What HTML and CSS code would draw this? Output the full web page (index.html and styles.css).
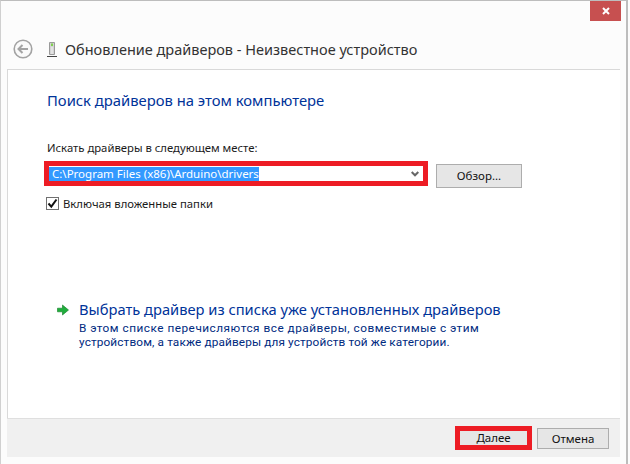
FILE: index.html
```html
<!DOCTYPE html>
<html lang="ru">
<head>
<meta charset="utf-8">
<title>Обновление драйверов</title>
<link rel="stylesheet" href="styles.css">
</head>
<body>
<div class="window">
  <div class="caption">
    <div class="close"><svg width="8" height="8" viewBox="0 0 8 8"><path d="M1 1 7 7M7 1 1 7" stroke="#fff" stroke-width="2" fill="none"/></svg></div>
  </div>
  <div class="header">
    <svg class="back" width="20" height="20" viewBox="0 0 20 20"><circle cx="10" cy="10" r="8.800" fill="#fafafa" stroke="#a3a3a3" stroke-width="1.600"/><path d="M5.500 10H15M9.500 6 5.500 10l4 4" fill="none" stroke="#a3a3a3" stroke-width="2"/></svg>
    <svg class="device" width="10" height="15" viewBox="0 0 10 15"><path d="M2.500.5h5v12h-5z" fill="#d4d4d4" stroke="#9a9a9a"/><path d="M4 1.500h2v2.500H4z" fill="#7fd04f"/><path d="M4.500 5h1v7h-1z" fill="#f2f2f2"/><path d="M0 14.500h10" stroke="#444"/></svg>
    <span class="title">Обновление драйверов - Неизвестное устройство</span>
  </div>
  <div class="panel">
    <h1 class="heading">Поиск драйверов на этом компьютере</h1>
    <div class="label">Искать драйверы в следующем месте:</div>
    <div class="path-row">
      <div class="combo">
        <span class="selected">C:\Program Files (x86)\Arduino\drivers</span>
        <svg class="chevron" width="8" height="6" viewBox="0 0 8 6"><path d="M.7 1 4 4.300 7.300 1" fill="none" stroke="#666" stroke-width="2"/></svg>
      </div>
      <div class="btn browse">Обзор...</div>
    </div>
    <div class="check-row">
      <span class="checkbox"><svg width="11" height="11" viewBox="0 0 11 11"><path d="M1.500 5.500 4.300 8.700 9.500 1.500" fill="none" stroke="#111" stroke-width="2"/></svg></span>
      <span>Включая вложенные папки</span>
    </div>
    <div class="link-row">
      <svg class="arrow" width="12" height="12" viewBox="0 0 12 12"><path d="M.5 4.200H5.500V1L11.500 6 5.500 11V7.800H.5z" fill="#1fae3c" stroke="#0f7c24" stroke-width=".6"/></svg>
      <div>
        <div class="link-title">Выбрать драйвер из списка уже установленных драйверов</div>
        <div class="link-desc line-one">В этом списке перечисляются все драйверы, совместимые с этим</div>
        <div class="link-desc line-two">устройством, а также драйверы для устройств той же категории.</div>
      </div>
    </div>
  </div>
  <div class="footer">
    <div class="btn next">Далее</div>
    <div class="btn cancel">Отмена</div>
  </div>
</div>
</body>
</html>
```
FILE: styles.css
```css
* { box-sizing: border-box; }
html, body { margin: 0; padding: 0; background: #fcfcfc; }
body { width: 630px; height: 464px; overflow: hidden; font-family: "Noto Sans", "Open Sans", sans-serif; font-size: 11.300px; color: #1a1a1a; }
.window { width: 628px; height: 464px; background: #fcfcfc; border-top: 1px solid #bdbdbd; border-left: 1px solid #d0d0d0; border-right: 2px solid #bdbdbd; display: flex; flex-direction: column; }
.caption { height: 20px; display: flex; justify-content: flex-end; padding-right: 5px; }
.close { width: 31px; height: 20px; background: #c75050; display: flex; align-items: center; justify-content: center; }
.header { height: 48px; padding: 7px 0 0 12px; display: flex; align-items: center; }
.back { margin-right: 14px; margin-top: 1px; }
.device { margin-right: 8px; margin-top: 1px; }
.title { font-size: 14.500px; color: #333; }
.panel { flex: none; height: 349px; margin: 0 6px 0 6px; background: #fff; border: 1px solid #d9d9d9; border-bottom: none; border-right: none; padding: 20px 0 0 39px; }
.heading { margin: 0; font-size: 14.800px; font-weight: 400; color: #003399; line-height: 20px; }
.label { margin-top: 30px; line-height: 15px; }
.path-row { display: flex; align-items: flex-start; margin-top: 6px; margin-left: -3px; }
.combo { width: 384px; height: 25px; border: 5px solid #ed1c24; padding: 0 4px 0 0; display: flex; align-items: center; justify-content: space-between; }
.selected { background: #3399ff; color: #fff; font-size: 11.500px; line-height: 14px; padding: 0 0 0 3px; white-space: nowrap; }
.btn { background: #e6e6e6; border: 1px solid #adadad; color: #111; text-align: center; font-size: 11.500px; }
.browse { width: 86px; height: 24px; line-height: 22px; margin: 3px 0 0 8px; }
.check-row { display: flex; align-items: center; gap: 4px; margin-top: 8px; margin-left: -1px; line-height: 15px; }
.checkbox { width: 13px; height: 13px; border: 1px solid #707070; display: flex; align-items: center; justify-content: center; }
.link-row { display: flex; margin-top: 88px; margin-left: 10px; }
.arrow { margin-top: 5px; margin-right: 10px; flex: none; }
.link-title { font-size: 14.700px; line-height: 20px; color: #003399; }
.link-desc { font-family: Roboto, "Noto Sans", sans-serif; font-size: 11.800px; line-height: 14px; color: #002a80; white-space: nowrap; }
.line-one { letter-spacing: .5px; margin-top: 2px; }
.line-two { letter-spacing: .13px; }
.footer { flex: none; height: 39px; margin: 0 6px 0 6px; background: #f0f0f0; border-top: 1px solid #dfdfdf; display: flex; justify-content: flex-end; align-items: center; gap: 5px; padding-right: 11px; }
.next { width: 77px; height: 24px; line-height: 14px; border: 5px solid #ed1c24; }
.cancel { width: 72px; height: 21px; line-height: 19px; }
```
